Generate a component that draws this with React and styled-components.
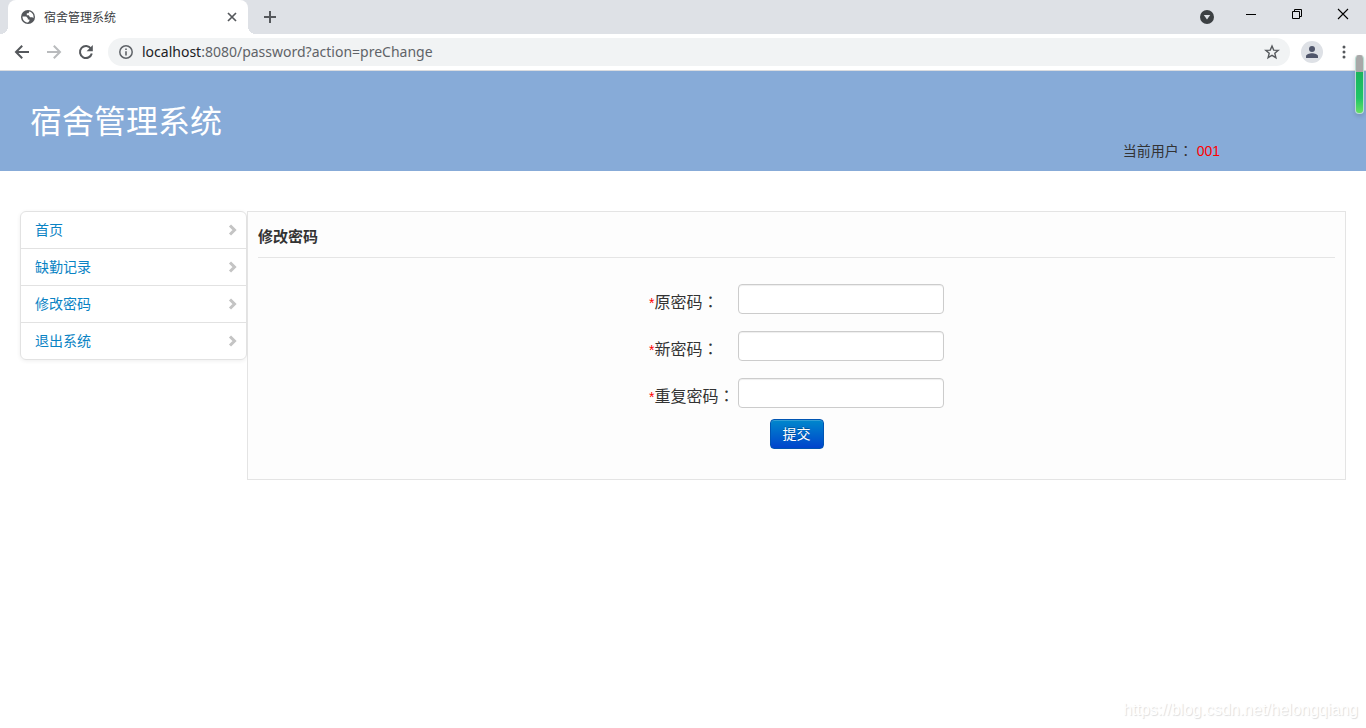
import React, { Component } from 'react';
import styled, { createGlobalStyle } from 'styled-components';

const GlobalStyle = createGlobalStyle`
  * {
    box-sizing: border-box;
  }
  body {
    margin: 0;
    background: #fff;
    color: #333;
    font-family: 'Liberation Sans', 'Noto Sans CJK SC', sans-serif;
    font-size: 14px;
    line-height: 20px;
  }
  button,
  input {
    font-family: inherit;
  }
`;

const Page = styled.div`
  min-height: 100vh;
  display: flex;
  flex-direction: column;
`;

/* browser window */

const TabStrip = styled.div`
  height: 34px;
  padding-left: 8px;
  display: flex;
  justify-content: space-between;
  background: #dee1e6;
`;

const Tabs = styled.div`
  display: flex;
  align-items: center;
`;

const Tab = styled.div`
  position: relative;
  width: 240px;
  height: 34px;
  padding: 0 8px 0 12px;
  display: flex;
  align-items: center;
  background: #fff;
  border-radius: 8px 8px 0 0;

  /* curved feet of the active tab */
  &::before,
  &::after {
    content: '';
    position: absolute;
    bottom: 0;
    width: 8px;
    height: 8px;
  }
  &::before {
    left: -8px;
    background: radial-gradient(circle at 0 0, #dee1e6 8px, #fff 8px);
  }
  &::after {
    right: -8px;
    background: radial-gradient(circle at 100% 0, #dee1e6 8px, #fff 8px);
  }
`;

const TabTitle = styled.span`
  flex: 1;
  margin-left: 8px;
  padding-top: 2px;
  font-size: 12px;
  color: #3c4043;
`;

const IconButton = styled.button`
  width: ${(props) => props.$width || 32}px;
  height: ${(props) => props.$height || 32}px;
  padding: 0;
  display: flex;
  align-items: center;
  justify-content: center;
  border: 0;
  background: none;
  color: ${(props) => props.$color || '#55585c'};
`;

const WindowButtons = styled.div`
  display: flex;
  height: 30px;
`;

const Toolbar = styled.div`
  height: 37px;
  padding-left: 6px;
  padding-right: 6px;
  display: flex;
  align-items: center;
  border-bottom: 1px solid #dadce0;
  background: #fff;
`;

const AddressBar = styled.div`
  flex: 1;
  height: 28px;
  margin-left: 6px;
  margin-right: 6px;
  padding-left: 10px;
  display: flex;
  align-items: center;
  border-radius: 14px;
  background: #f1f3f4;
`;

const Address = styled.div`
  flex: 1;
  margin-left: 8px;
  font-family: 'Noto Sans', sans-serif;
  font-size: 14px;
  color: #5f6368;
`;

const Host = styled.span`
  color: #202124;
`;

const Avatar = styled.span`
  width: 22px;
  height: 22px;
  display: flex;
  align-items: center;
  justify-content: center;
  border-radius: 50%;
  background: #dee1e6;
`;

const ScrollMark = styled.div`
  position: absolute;
  top: 55px;
  right: 2px;
  width: 9px;
  height: 59px;
  border: 1px solid #b9dcd2;
  border-top-color: #a8a8a8;
  border-radius: 4px;
  background: linear-gradient(
    #a8a8a8 16px,
    #19b45c 16px,
    #1fc566 42px,
    #6ae264 58px
  );
  box-shadow: 0 2px 4px rgba(0, 0, 0, 0.15);
`;

/* page */

const Header = styled.header`
  height: 100px;
  padding: 0 146px 0 30px;
  display: flex;
  justify-content: space-between;
  background: #87abd8;
`;

const SystemName = styled.h1`
  margin: 31px 0 0;
  font-size: 32px;
  font-weight: 400;
  line-height: 40px;
  color: #fff;
`;

const CurrentUser = styled.div`
  align-self: flex-end;
  margin-bottom: 10px;
`;

const UserId = styled.span`
  margin-left: 4px;
  color: #f00;
`;

const FullColon = styled.span`
  font-family: 'Noto Sans CJK TC', sans-serif;
`;

const Content = styled.main`
  padding: 40px 20px;
  display: flex;
  align-items: flex-start;
`;

const Menu = styled.ul`
  width: 227px;
  margin: 0;
  padding: 0;
  list-style: none;
  border: 1px solid #e2e2e2;
  border-radius: 6px;
  box-shadow: 0 1px 4px rgba(0, 0, 0, 0.07);
`;

const MenuItem = styled.li`
  & + & {
    border-top: 1px solid #e2e2e2;
  }
`;

const MenuLink = styled.a`
  height: 36px;
  padding: 0 8px 0 14px;
  display: flex;
  align-items: center;
  justify-content: space-between;
  color: #0a83c4;
  text-decoration: none;
`;

const Panel = styled.section`
  flex: 1;
  padding: 10px;
  border: 1px solid #e4e4e4;
  background: #fdfdfd;
`;

const PanelTitle = styled.h2`
  margin: 0;
  padding: 5px 0 10px;
  border-bottom: 1px solid #e5e5e5;
  font-size: 15px;
  font-weight: 700;
  line-height: 20px;
`;

const Form = styled.form`
  padding: 26px 0 20px;
  display: flex;
  flex-direction: column;
  align-items: center;
`;

const Field = styled.div`
  margin-bottom: 17px;
  display: grid;
  grid-template-columns: 89px 206px;

  &:last-of-type {
    margin-bottom: 11px;
  }
`;

const Label = styled.label`
  padding-top: 6px;
  font-size: 16px;
  line-height: 22px;
  white-space: nowrap;
`;

const Required = styled.span`
  font-size: 14px;
  color: #f00;
`;

const PasswordInput = styled.input`
  width: 100%;
  height: 30px;
  padding: 4px 6px;
  border: 1px solid #ccc;
  border-radius: 4px;
  background: #fff;
  box-shadow: inset 0 1px 1px rgba(0, 0, 0, 0.07);
`;

const Submit = styled.button`
  height: 30px;
  padding: 0 12px;
  border: 1px solid #0055b3;
  border-radius: 4px;
  background: linear-gradient(#0088cc, #0044cc);
  box-shadow: inset 0 1px 0 rgba(255, 255, 255, 0.2);
  color: #fff;
  font-size: 14px;
  line-height: 20px;
  text-shadow: 0 -1px 0 rgba(0, 0, 0, 0.25);
`;

const Watermark = styled.div`
  margin-top: auto;
  padding: 0 8px 8px 0;
  text-align: right;
  font-size: 16px;
  color: #fff;
  text-shadow: 1px 1px 1px #ddd;
`;

const menu = ['首页', '缺勤记录', '修改密码', '退出系统'];

const fields = [
  { name: 'oldPassword', label: '原密码' },
  { name: 'newPassword', label: '新密码' },
  { name: 'rePassword', label: '重复密码' },
];

const Globe = () => (
  <svg width='16' height='16' viewBox='0 0 16 16'>
    <circle cx='8' cy='8' r='7' fill='#54575b' />
    <path
      d='M2.5 7.6H6.2L7.8 9.2V10.6H9.4V12L8 13.6C4.8 13.6 2.4 11 2.5 7.6ZM9.2 2.6 8.6 4.2H6.8V6.2H8.8L10 8.2H12.2L13.5 9C14 5.6 12 3.2 9.2 2.6Z'
      fill='#fff'
    />
  </svg>
);

const Stroke = ({ d, size = 16, width = 2 }) => (
  <svg width={size} height={size} viewBox='0 0 16 16' fill='none'>
    <path d={d} stroke='currentColor' strokeWidth={width} />
  </svg>
);

const Reload = () => (
  <svg width='16' height='16' viewBox='0 0 16 16' fill='none'>
    <path
      d='M13 4.7A6 6 0 1 0 13.8 9.5'
      stroke='currentColor'
      strokeWidth='2'
    />
    <path d='M14.8 1V7.2H8.6Z' fill='currentColor' />
  </svg>
);

const Info = () => (
  <svg width='16' height='16' viewBox='0 0 16 16' fill='none'>
    <circle cx='8' cy='8' r='6.2' stroke='#5f6368' strokeWidth='1.5' />
    <path d='M8 7.2V11.4M8 4.5V6' stroke='#5f6368' strokeWidth='1.6' />
  </svg>
);

const Star = () => (
  <svg width='16' height='16' viewBox='0 0 16 16' fill='none'>
    <path
      d='M8 2 9.7 6.1 14.2 6.4 10.8 9.3 11.9 13.7 8 11.3 4.1 13.7 5.2 9.3 1.8 6.4 6.3 6.1Z'
      stroke='currentColor'
      strokeWidth='1.4'
    />
  </svg>
);

const Person = () => (
  <svg width='14' height='14' viewBox='0 0 14 14' fill='#50566b'>
    <circle cx='7' cy='4' r='3' />
    <path d='M1 13V11.2C1 9.2 4.5 8.2 7 8.2S13 9.2 13 11.2V13Z' />
  </svg>
);

const Dots = () => (
  <svg width='16' height='16' viewBox='0 0 16 16' fill='currentColor'>
    <circle cx='8' cy='3' r='1.5' />
    <circle cx='8' cy='8' r='1.5' />
    <circle cx='8' cy='13' r='1.5' />
  </svg>
);

const TabSearch = () => (
  <svg width='14' height='14' viewBox='0 0 14 14'>
    <circle cx='7' cy='7' r='7' fill='#3c4043' />
    <path d='M3.8 5H10.2L7 9.6Z' fill='#dee1e6' />
  </svg>
);

const Restore = () => (
  <svg width='10' height='10' viewBox='0 0 10 10' fill='none' stroke='#000'>
    <path d='M.5 2.5H7.5V9.5H.5ZM2.5 2.5V.5H9.5V7.5H7.5' />
  </svg>
);

const Chevron = () => (
  <svg width='10' height='12' viewBox='0 0 10 12' fill='none'>
    <path d='M2 1.5 6.5 6 2 10.5' stroke='#c4c4c4' strokeWidth='3' />
  </svg>
);

class BrowserBar extends Component {
  render() {
    return (
      <>
        <TabStrip>
          <Tabs>
            <Tab>
              <Globe />
              <TabTitle>宿舍管理系统</TabTitle>
              <IconButton $width={16} $height={16} aria-label='关闭标签页'>
                <Stroke d='M4 4 12 12M12 4 4 12' width={1.7} />
              </IconButton>
            </Tab>
            <IconButton $width={44} aria-label='新标签页'>
              <Stroke d='M8 2V14M2 8H14' />
            </IconButton>
          </Tabs>
          <WindowButtons>
            <IconButton $width={42} $height={34} aria-label='搜索标签页'>
              <TabSearch />
            </IconButton>
            <IconButton $width={46} $height={28} aria-label='最小化'>
              <svg width='10' height='1'>
                <path d='M0 .5H10' stroke='#000' />
              </svg>
            </IconButton>
            <IconButton $width={46} $height={28} aria-label='还原'>
              <Restore />
            </IconButton>
            <IconButton
              $width={46}
              $height={28}
              $color='#000'
              aria-label='关闭'
            >
              <Stroke d='M3 3 13 13M13 3 3 13' width={1.1} />
            </IconButton>
          </WindowButtons>
        </TabStrip>
        <Toolbar>
          <IconButton aria-label='后退'>
            <Stroke d='M15 8H2.4M8.2 1.8 2 8 8.2 14.2' />
          </IconButton>
          <IconButton $color='#b9bbbd' aria-label='前进'>
            <Stroke d='M1 8H13.6M7.8 1.8 14 8 7.8 14.2' />
          </IconButton>
          <IconButton aria-label='重新加载'>
            <Reload />
          </IconButton>
          <AddressBar>
            <Info />
            <Address>
              <Host>localhost</Host>:8080/password?action=preChange
            </Address>
            <IconButton $width={36} $height={28} aria-label='收藏'>
              <Star />
            </IconButton>
          </AddressBar>
          <IconButton aria-label='用户'>
            <Avatar>
              <Person />
            </Avatar>
          </IconButton>
          <IconButton aria-label='菜单'>
            <Dots />
          </IconButton>
        </Toolbar>
        <ScrollMark />
      </>
    );
  }
}

export default class App extends Component {
  render() {
    return (
      <Page>
        <GlobalStyle />
        <BrowserBar />
        <Header>
          <SystemName>宿舍管理系统</SystemName>
          <CurrentUser>
            当前用户<FullColon>：</FullColon>
            <UserId>001</UserId>
          </CurrentUser>
        </Header>
        <Content>
          {/* left side menu */}
          <Menu>
            {menu.map((item) => (
              <MenuItem key={item}>
                <MenuLink href='#'>
                  {item}
                  <Chevron />
                </MenuLink>
              </MenuItem>
            ))}
          </Menu>
          {/* change password form */}
          <Panel>
            <PanelTitle>修改密码</PanelTitle>
            <Form onSubmit={(e) => e.preventDefault()}>
              {fields.map((field) => (
                <Field key={field.name}>
                  <Label htmlFor={field.name}>
                    <Required>*</Required>
                    {field.label}
                    <FullColon>：</FullColon>
                  </Label>
                  <PasswordInput
                    type='password'
                    id={field.name}
                    name={field.name}
                  />
                </Field>
              ))}
              <Submit type='submit'>提交</Submit>
            </Form>
          </Panel>
        </Content>
        <Watermark>https://blog.csdn.net/helongqiang</Watermark>
      </Page>
    );
  }
}
